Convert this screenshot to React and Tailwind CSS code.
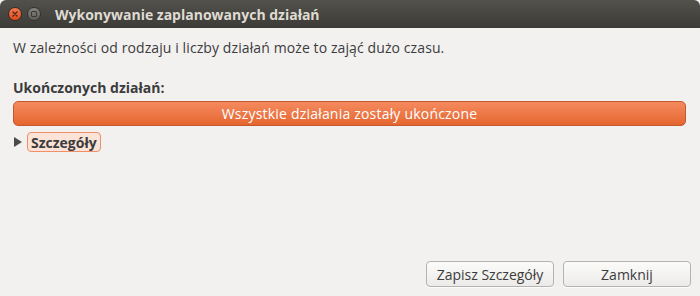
import React from 'react';

const font = { fontFamily: '"Open Sans", "DejaVu Sans", sans-serif' };

const TitleBar = () => (
  <div className="flex items-center h-[28px] rounded-t-[6px] bg-gradient-to-b from-[#52514c] to-[#3c3b37] pl-[8px]">
    <div className="w-[14px] h-[14px] rounded-full bg-gradient-to-b from-[#f47a4f] to-[#df4a18] border border-[#3a2a22] flex items-center justify-center">
      <svg width="6" height="6" viewBox="0 0 6 6">
        <path d="M1 1L5 5M5 1L1 5" stroke="#4a2418" strokeWidth="1.4" strokeLinecap="round" />
      </svg>
    </div>
    <div className="ml-[5px] w-[14px] h-[14px] rounded-full bg-gradient-to-b from-[#85847f] to-[#5e5d58] border border-[#33322e] flex items-center justify-center">
      <div className="w-[6px] h-[6px] border border-[#3a3935] rounded-[1px]" />
    </div>
    <span className="ml-[14px] text-[14px] font-bold text-[#dfdbd2]">Wykonywanie zaplanowanych działań</span>
  </div>
);

const Button = ({ children }) => (
  <button className="w-[128px] h-[26px] rounded-[4px] border border-[#b5b3ae] bg-gradient-to-b from-[#fbfbfa] to-[#ecebe9] text-[14px] text-[#3c3c3c] shadow-[0_1px_0_rgba(255,255,255,0.8)]">
    {children}
  </button>
);

export default function App() {
  return (
    <div style={font} className="w-[700px] h-[296px] bg-[#f2f1f0] flex flex-col overflow-hidden">
      <TitleBar />
      <div className="flex flex-col flex-1 px-[13px]">
        <p className="mt-[11px] text-[14px] tracking-[0.1px] text-[#3c3c3c] leading-[18px]">
          W zależności od rodzaju i liczby działań może to zająć dużo czasu.
        </p>
        <p className="mt-[22px] text-[14px] font-bold text-[#3c3c3c] leading-[18px]">Ukończonych działań:</p>
        <div className="mt-[4px] mr-[1px] h-[25px] rounded-[5px] border border-[#c4572d] bg-gradient-to-b from-[#f48a5e] to-[#e5662e] flex items-center justify-center text-[14px] tracking-[0.2px] text-white">
          Wszystkie działania zostały ukończone
        </div>
        <div className="mt-[6px] flex items-center">
          <svg width="8" height="10" viewBox="0 0 8 10" className="ml-[1px]">
            <path d="M0 0L8 5L0 10Z" fill="#4a4a47" />
          </svg>
          <span className="ml-[5px] h-[20px] px-[3px] flex items-center rounded-[4px] border border-[#f0906a] bg-[#fbe3d8] text-[14px] font-bold text-[#3c3c3c]">
            Szczegóły
          </span>
        </div>
        <div className="flex-1" />
        <div className="flex justify-end gap-[9px] mb-[9px] mr-[-4px]">
          <Button>Zapisz Szczegóły</Button>
          <Button>Zamknij</Button>
        </div>
      </div>
    </div>
  );
}
